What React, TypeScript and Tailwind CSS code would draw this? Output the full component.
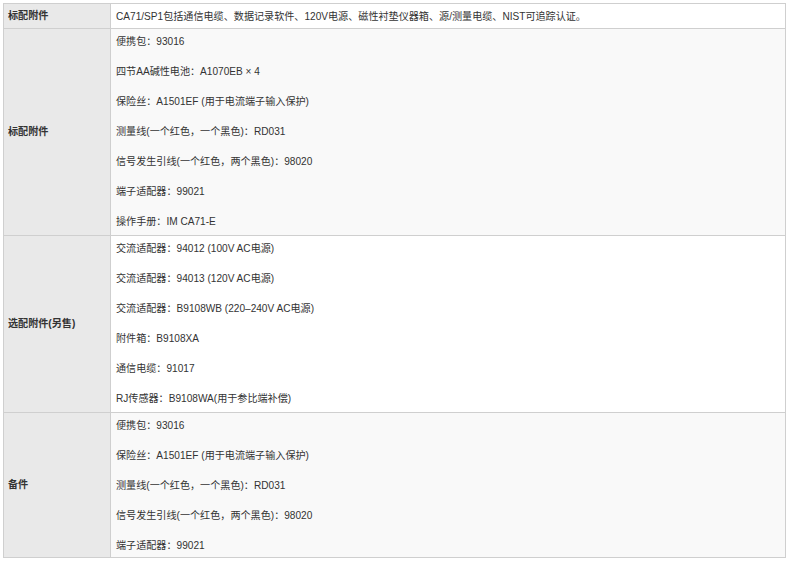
import React from "react";

const rows: { label: string; items: string[]; bg: string }[] = [
  {
    label: "标配附件",
    items: ["CA71/SP1包括通信电缆、数据记录软件、120V电源、磁性衬垫仪器箱、源/测量电缆、NIST可追踪认证。"],
    bg: "bg-white",
  },
  {
    label: "标配附件",
    items: [
      "便携包：93016",
      "四节AA碱性电池：A1070EB × 4",
      "保险丝：A1501EF (用于电流端子输入保护)",
      "测量线(一个红色，一个黑色)：RD031",
      "信号发生引线(一个红色，两个黑色)：98020",
      "端子适配器：99021",
      "操作手册：IM CA71-E",
    ],
    bg: "bg-[#f9f9f9]",
  },
  {
    label: "选配附件(另售)",
    items: [
      "交流适配器：94012 (100V AC电源)",
      "交流适配器：94013 (120V AC电源)",
      "交流适配器：B9108WB (220–240V AC电源)",
      "附件箱：B9108XA",
      "通信电缆：91017",
      "RJ传感器：B9108WA(用于参比端补偿)",
    ],
    bg: "bg-white",
  },
  {
    label: "备件",
    items: [
      "便携包：93016",
      "保险丝：A1501EF (用于电流端子输入保护)",
      "测量线(一个红色，一个黑色)：RD031",
      "信号发生引线(一个红色，两个黑色)：98020",
      "端子适配器：99021",
    ],
    bg: "bg-[#f9f9f9]",
  },
];

export default function App() {
  return (
    <div
      className="w-[790px] h-[562px] bg-white pt-[3px] pl-[3px] text-[#333] text-[10.1px]"
      style={{ fontFamily: '"Liberation Sans", Arial, "Noto Sans CJK SC", sans-serif' }}
    >
      <table className="w-[783px] border-collapse border border-[#cfcfcf]">
        <tbody>
          {rows.map((r, i) => (
            <tr key={i}>
              <td className="w-[107px] bg-[#e9e9e9] border border-[#cfcfcf] align-middle pl-[4px] font-bold">
                {r.label}
              </td>
              <td
                className={`${r.bg} border border-[#cfcfcf] px-[5px] ${
                  i === 0 ? "pt-[4px] pb-[2px]" : i === 3 ? "pt-[4px] pb-[2px]" : "py-[4px]"
                }`}
              >
                <div className="flex flex-col gap-[12px]">
                  {r.items.map((t, j) => (
                    <p key={j} className="leading-[18px] m-0">
                      {t}
                    </p>
                  ))}
                </div>
              </td>
            </tr>
          ))}
        </tbody>
      </table>
    </div>
  );
}
